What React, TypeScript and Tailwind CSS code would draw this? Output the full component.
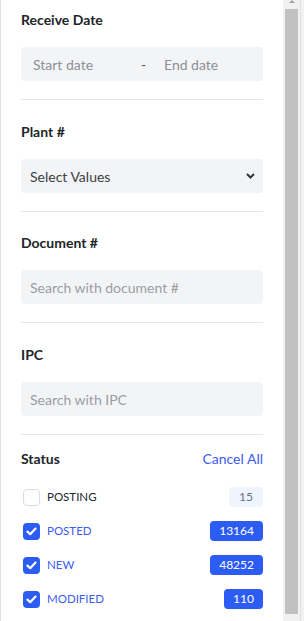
import React from "react";

const font = { fontFamily: "Lato, 'Noto Sans', sans-serif" };

function Check() {
  return (
    <svg width="11" height="9" viewBox="0 0 11 9" fill="none">
      <path d="M1.5 4.6 L4.2 7.2 L9.5 1.6" stroke="white" strokeWidth="2.2" strokeLinecap="round" strokeLinejoin="round" />
    </svg>
  );
}

function Row({ label, count, checked }: { label: string; count: string; checked: boolean }) {
  return (
    <div className="flex h-5 items-center">
      {checked ? (
        <div className="ml-[2px] flex h-[17px] w-[17px] items-center justify-center rounded-[4px] bg-[#2c5cf3]">
          <Check />
        </div>
      ) : (
        <div className="ml-[2px] h-[17px] w-[17px] rounded-[4px] border border-[#d9dbe0] bg-white" />
      )}
      <span className={`ml-[7px] text-[11.5px] leading-5 ${checked ? "text-[#3d5cf0]" : "text-[#222831]"}`}>{label}</span>
      <div className="flex-1" />
      {checked ? (
        <span className="flex h-5 items-center rounded-[4px] bg-[#2c5cf3] px-[9px] text-[12px] text-white">{count}</span>
      ) : (
        <span className="flex h-5 items-center rounded-[4px] bg-[#eef5fe] px-[10px] text-[12px] text-[#6b7280]">{count}</span>
      )}
    </div>
  );
}

export default function App() {
  return (
    <div className="flex h-[621px] w-[304px] overflow-hidden bg-white" style={font}>
      <div className="w-px bg-[#e3e3e3]" />
      <div className="w-[242px] ml-5">
        <div className="pt-[10px] pb-[18px] border-b border-[#e5e7eb]">
          <div className="h-5 text-[14px] leading-5 font-bold text-[#212529]">Receive Date</div>
          <div className="mt-[17px] flex h-[34px] items-center rounded-[4px] bg-[#f3f4f6] px-3 text-[14px]">
            <span className="w-[108px] text-[#8b9099]">Start date</span>
            <span className="w-[23px] text-[#50555c]">-</span>
            <span className="text-[#8b9099]">End date</span>
          </div>
        </div>
        <div className="pt-[22px] pb-[18px] border-b border-[#e5e7eb]">
          <div className="h-5 text-[14px] leading-5 font-bold text-[#212529]">Plant #</div>
          <div className="mt-[17px] flex h-[34px] items-center rounded-[4px] bg-[#f3f4f6] pl-[9px] pr-[8px] text-[14px]">
            <span className="flex-1 text-[#3b4048]">Select Values</span>
            <svg width="9" height="6" viewBox="0 0 9 6" fill="none">
              <path d="M1 1 L4.5 4.5 L8 1" stroke="#333" strokeWidth="2" />
            </svg>
          </div>
        </div>
        <div className="pt-[21px] pb-[18px] border-b border-[#e5e7eb]">
          <div className="h-5 text-[14px] leading-5 font-bold text-[#212529]">Document #</div>
          <div className="mt-[17px] flex h-[34px] items-center rounded-[4px] bg-[#f3f4f6] pl-[9px] text-[14px] text-[#9a9ea6]">
            Search with document #
          </div>
        </div>
        <div className="pt-[22px] pb-[18px] border-b border-[#e5e7eb]">
          <div className="h-5 text-[14px] leading-5 font-bold text-[#212529]">IPC</div>
          <div className="mt-[17px] flex h-[34px] items-center rounded-[4px] bg-[#f3f4f6] pl-[9px] text-[14px] text-[#9a9ea6]">
            Search with IPC
          </div>
        </div>
        <div className="pt-[14px]">
          <div className="flex h-5 items-center justify-between text-[14px] leading-5">
            <span className="font-bold text-[#212529]">Status</span>
            <span className="text-[#3d5cf0]">Cancel All</span>
          </div>
          <div className="mt-[18px] flex flex-col gap-[14px]">
            <Row label="POSTING" count="15" checked={false} />
            <Row label="POSTED" count="13164" checked />
            <Row label="NEW" count="48252" checked />
            <Row label="MODIFIED" count="110" checked />
          </div>
        </div>
      </div>
      <div className="w-5" />
      <div className="relative w-[17px] bg-[#f1f1f1]">
        <div className="absolute left-[6px] top-0 h-0 w-0 border-x-[3px] border-b-[3px] border-x-transparent border-b-[#a3a3a3]" />
        <div className="absolute left-[2px] right-[2px] top-[9px] bottom-[7px] bg-[#c1c1c1]" />
      </div>
      <div className="w-px bg-[#e2e2e2]" />
      <div className="flex-1 bg-[#f2f2f2]" />
    </div>
  );
}
